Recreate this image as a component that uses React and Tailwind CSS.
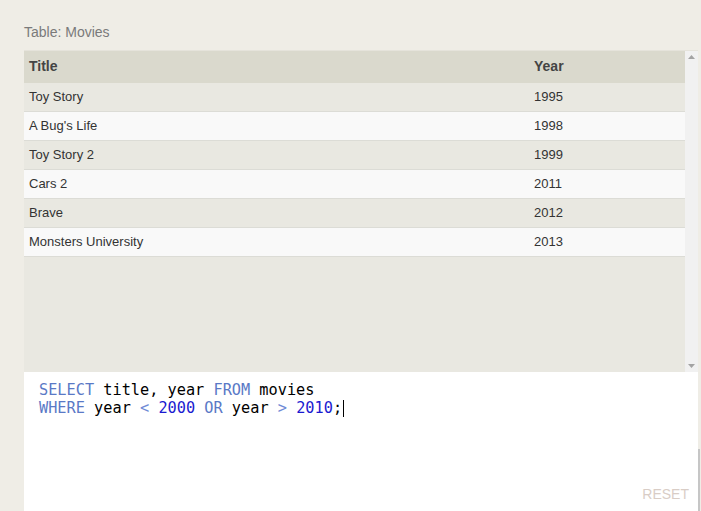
import React from "react";

const movies = [
  ["Toy Story", "1995"],
  ["A Bug's Life", "1998"],
  ["Toy Story 2", "1999"],
  ["Cars 2", "2011"],
  ["Brave", "2012"],
  ["Monsters University", "2013"],
];

export default function App() {
  return (
    <div className="w-[701px] h-[511px] overflow-hidden bg-[#efede6] relative" style={{ fontFamily: '"Liberation Sans", Arial, sans-serif' }}>
      <div className="pl-[24px] pr-[3px] pt-[22px] flex flex-col">
        <div className="text-[14px] leading-[20px] text-[#7a7a7a] h-[28px]">Table: Movies</div>
        <div className="border-t border-[#e5e3db] flex h-[322px]">
          <div className="flex-1 bg-[#e9e8e1] flex flex-col">
            <div className="flex h-[32px] items-center pb-[2px] bg-[#dad9cd] text-[14px] font-bold text-[#444]">
              <div className="w-[505px] pl-[5px]">Title</div>
              <div className="pl-[5px]">Year</div>
            </div>
            {movies.map(([t, y], i) => (
              <div
                key={t}
                className={`flex h-[29px] items-center text-[13px] text-[#333] border-b border-[#dcdcd6] ${i % 2 === 0 ? "bg-[#e9e8e1]" : "bg-[#f9f9f9]"}`}
              >
                <div className="w-[505px] pl-[5px]">{t}</div>
                <div className="pl-[5px]">{y}</div>
              </div>
            ))}
          </div>
          <div className="w-[13px] bg-[#f1f1f1] flex flex-col justify-between items-center py-[4px]">
            <svg width="7" height="4" viewBox="0 0 7 4"><path d="M3.5 0 L7 4 L0 4 Z" fill="#a3a3a3" /></svg>
            <svg width="7" height="4" viewBox="0 0 7 4"><path d="M0 0 L7 0 L3.5 4 Z" fill="#a3a3a3" /></svg>
          </div>
        </div>
        <div className="bg-white h-[150px] relative pl-[15px] pt-[9px]">
          <div className="text-[15.25px] leading-[18px] whitespace-pre" style={{ fontFamily: '"DejaVu Sans Mono", monospace' }}>
            <div>
              <span className="text-[#5a79c6]">SELECT</span>
              <span className="text-black"> title, year </span>
              <span className="text-[#5a79c6]">FROM</span>
              <span className="text-black"> movies</span>
            </div>
            <div className="flex items-center">
              <span className="text-[#5a79c6]">WHERE</span>
              <span className="text-black"> year </span>
              <span className="text-[#6f8bd6]">&lt;</span>
              <span className="text-black"> </span>
              <span className="text-[#1a1ad0]">2000</span>
              <span className="text-black"> </span>
              <span className="text-[#5a79c6]">OR</span>
              <span className="text-black"> year </span>
              <span className="text-[#6f8bd6]">&gt;</span>
              <span className="text-black"> </span>
              <span className="text-[#1a1ad0]">2010</span>
              <span className="text-black">;</span>
              <span className="inline-block w-[1px] h-[17px] bg-black ml-[1px]"></span>
            </div>
          </div>
          <div className="absolute right-[9px] top-[114px] text-[14px] text-[#d9cdc6] leading-[16px]">RESET</div>
        </div>
      </div>
      <div className="absolute right-[1px] top-[449px] w-[2px] h-[62px] bg-[#c6c6c6]"></div>
    </div>
  );
}
